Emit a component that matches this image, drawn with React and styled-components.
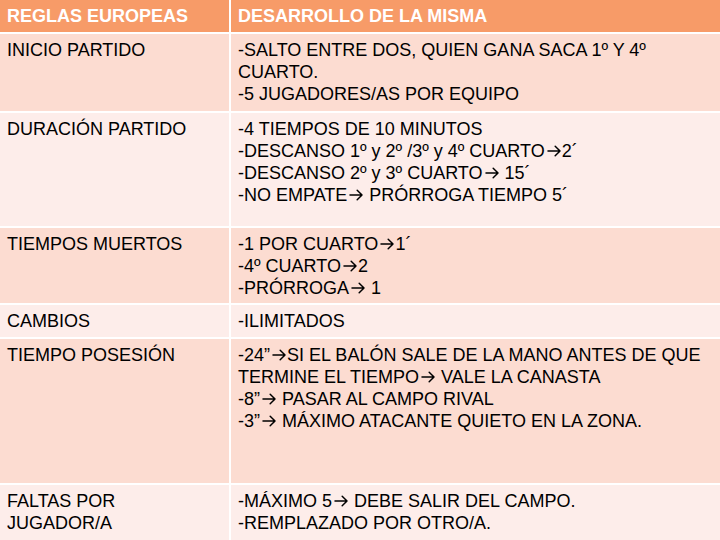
import React from "react";
import styled, { createGlobalStyle } from "styled-components";

const Global = createGlobalStyle`
  html, body { margin: 0; padding: 0; background: #ffffff; }
  body { font-family: "Liberation Sans", Arial, sans-serif; }
`;

const Table = styled.div`
  width: 720px;
  height: 540px;
  display: flex;
  flex-direction: column;
  gap: 2px;
  background: #ffffff;
  overflow: hidden;
`;

const Row = styled.div`
  display: grid;
  grid-template-columns: 229px 1fr;
  column-gap: 2px;
  height: ${(p) => p.$h}px;
  flex: none;
`;

const bg = { head: "#f79b68", band1: "#fcdcd1", band2: "#fdedea" };

const Cell = styled.div`
  background: ${(p) => bg[p.$tone]};
  color: ${(p) => (p.$tone === "head" ? "#ffffff" : "#000000")};
  font-weight: ${(p) => (p.$tone === "head" ? 700 : 400)};
  font-size: 18px;
  line-height: 22px;
  padding: 5px 7px;
  box-sizing: border-box;
  overflow: hidden;
`;

const Line = styled.div`
  white-space: nowrap;
`;

const ArrowSvg = styled.svg`
  width: 14px;
  height: 12px;
  margin: 0 1px 0 2px;
  vertical-align: 0px;
`;

const Arrow = () => (
  <ArrowSvg viewBox="0 0 14 12" fill="none" stroke="#000" strokeWidth="1.5" strokeLinecap="round" strokeLinejoin="round">
    <path d="M1 6 H13 M8.2 1.3 L13 6 L8.2 10.7" />
  </ArrowSvg>
);

const render = (t) => {
  const parts = t.split("→");
  return parts.map((p, i) => (
    <React.Fragment key={i}>
      {i > 0 && <Arrow />}
      {p}
    </React.Fragment>
  ));
};

const rows = [
  { left: ["INICIO PARTIDO"], right: ["-SALTO ENTRE DOS, QUIEN GANA SACA 1º Y 4º", "CUARTO.", "-5 JUGADORES/AS POR EQUIPO"], h: 77 },
  {
    left: ["DURACIÓN PARTIDO"],
    right: [
      "-4 TIEMPOS DE 10 MINUTOS",
      "-DESCANSO 1º y 2º /3º y 4º CUARTO→2´",
      "-DESCANSO 2º y 3º CUARTO→ 15´",
      "-NO EMPATE→ PRÓRROGA TIEMPO 5´",
    ],
    h: 113,
  },
  { left: ["TIEMPOS MUERTOS"], right: ["-1 POR CUARTO→1´", "-4º CUARTO→2", "-PRÓRROGA→ 1"], h: 75 },
  { left: ["CAMBIOS"], right: ["-ILIMITADOS"], h: 32 },
  {
    left: ["TIEMPO POSESIÓN"],
    right: [
      "-24”→SI EL BALÓN SALE DE LA MANO ANTES DE QUE",
      "TERMINE EL TIEMPO→ VALE LA CANASTA",
      "-8”→ PASAR AL CAMPO RIVAL",
      "-3”→ MÁXIMO ATACANTE QUIETO EN LA ZONA.",
    ],
    h: 144,
  },
  { left: ["FALTAS POR", "JUGADOR/A"], right: ["-MÁXIMO 5→ DEBE SALIR DEL CAMPO.", "-REMPLAZADO POR OTRO/A."], h: 55 },
];

export default function App() {
  return (
    <>
      <Global />
      <Table>
        <Row $h={32}>
          <Cell $tone="head">REGLAS EUROPEAS</Cell>
          <Cell $tone="head">DESARROLLO DE LA MISMA</Cell>
        </Row>
        {rows.map((r, i) => {
          const tone = i % 2 === 0 ? "band1" : "band2";
          return (
            <Row key={i} $h={r.h}>
              <Cell $tone={tone}>
                {r.left.map((t, j) => (
                  <Line key={j}>{t}</Line>
                ))}
              </Cell>
              <Cell $tone={tone}>
                {r.right.map((t, j) => (
                  <Line key={j}>{render(t)}</Line>
                ))}
              </Cell>
            </Row>
          );
        })}
      </Table>
    </>
  );
}
